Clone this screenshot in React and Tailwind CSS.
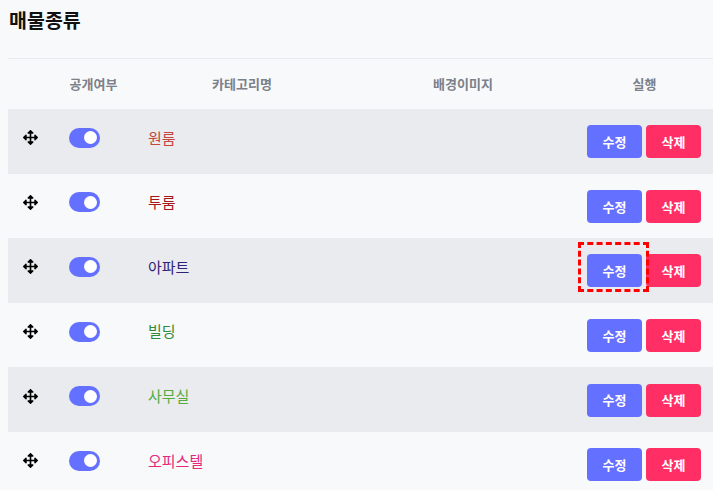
import React from "react";
import { FaArrowsAlt } from "react-icons/fa";

const rows = [
  { name: "원룸", color: "text-[#c4473f]", bg: "bg-[#e9ebee]" },
  { name: "투룸", color: "text-[#a3171c]", bg: "bg-[#f8f9fb]" },
  { name: "아파트", color: "text-[#2d2377]", bg: "bg-[#e9ebee]", marked: true },
  { name: "빌딩", color: "text-[#2f8a3c]", bg: "bg-[#f8f9fb]" },
  { name: "사무실", color: "text-[#56ab3f]", bg: "bg-[#e9ebee]" },
  { name: "오피스텔", color: "text-[#e4287c]", bg: "bg-[#f8f9fb]" },
];

const grid = "grid grid-cols-[45px_67px_244px_198px_1fr] items-center";

export default function App() {
  return (
    <div
      className="w-[713px] h-[490px] overflow-hidden bg-[#f8f9fb] pl-2"
      style={{ fontFamily: '"Noto Sans CJK KR", "Noto Sans", sans-serif' }}
    >
      <div className="h-[59px] border-b border-[#e9ebee] flex items-start pt-[5px]">
        <h1 className="pl-px text-[19.5px] font-bold text-[#111] leading-[30px]">매물종류</h1>
      </div>
      <div className={`${grid} h-[50px] text-[13px] font-semibold text-[#7b8089]`}>
        <div />
        <div className="text-center pl-[14px] whitespace-nowrap">공개여부</div>
        <div className="text-center">카테고리명</div>
        <div className="text-center">배경이미지</div>
        <div className="flex justify-end pr-3">
          <div className="w-[113px] text-center">실행</div>
        </div>
      </div>
      {rows.map((r) => (
        <div key={r.name} className={`${grid} h-[64.6px] ${r.bg}`}>
          <div className="flex justify-center pb-[7px]">
            <FaArrowsAlt className="w-[15px] h-[15px] text-black" />
          </div>
          <div className="flex justify-center pr-[4px] pb-[7px]">
            <div className="w-[31px] h-[20px] rounded-full bg-[#6470ff] flex items-center justify-end pr-[3px]">
              <div className="w-[13px] h-[13px] rounded-full bg-white" />
            </div>
          </div>
          <div className={`pl-7 pb-[7px] text-[15px] ${r.color}`}>{r.name}</div>
          <div />
          <div className="flex justify-end pr-3 gap-1 pt-[1px]">
            <div className="relative">
              <button className="w-[55px] h-[33px] rounded bg-[#6470ff] text-white text-[13px] font-bold">
                수정
              </button>
              {r.marked && (
                <span className="absolute left-[-9px] right-[-7px] top-[-12px] bottom-[-5px] border-[3px] border-dashed border-[#ff0000]" />
              )}
            </div>
            <button className="w-[55px] h-[33px] rounded bg-[#ff2f65] text-white text-[13px] font-bold">
              삭제
            </button>
          </div>
        </div>
      ))}
    </div>
  );
}
